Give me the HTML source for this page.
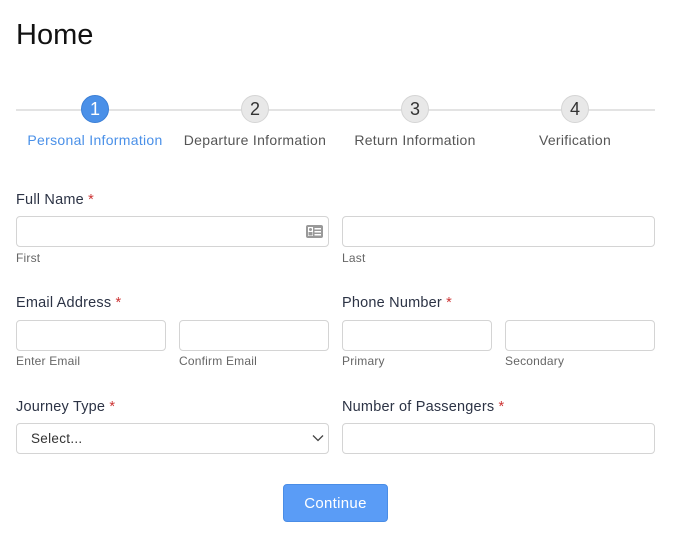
<!DOCTYPE html>
<html><head><style>
body{margin:0;width:680px;height:533px;background:#fff;font-family:"Liberation Sans",sans-serif;position:relative;overflow:hidden}
.a{position:absolute}
h1{position:absolute;left:16px;top:19px;margin:0;font-size:29px;font-weight:normal;color:#111}
.line{left:16px;top:109px;width:639px;height:2px;background:#e3e3e3}
.c{width:26px;height:26px;border-radius:50%;border:1px solid #d5d5d5;background:#e8e8e8;color:#333;font-size:18px;text-align:center;line-height:26px;top:95px}
.c.on{background:#4a90e8;border-color:#3b7fd6;color:#fff}
.st{top:132px;font-size:14px;color:#555;width:170px;text-align:center;letter-spacing:0.3px}
.lab{font-size:14.5px;color:#2c3345;letter-spacing:0.2px}
.lab span{color:#c33}
.in{border:1px solid #d4d4d4;border-radius:4px;box-sizing:border-box;height:31px;background:#fff}
.sub{font-size:12px;color:#666;letter-spacing:0.2px}
.btn{left:283px;top:484px;width:105px;height:38px;background:#5a9cf6;border:1px solid #4a8de6;box-sizing:border-box;border-radius:4px;color:#fff;font-size:15px;text-align:center;line-height:37px;letter-spacing:0.3px}
</style></head><body>
<h1>Home</h1>
<div class="a line"></div>
<div class="a c on" style="left:81px">1</div>
<div class="a c" style="left:241px">2</div>
<div class="a c" style="left:401px">3</div>
<div class="a c" style="left:561px">4</div>
<div class="a st" style="left:10px;color:#4a90e8">Personal Information</div>
<div class="a st" style="left:170px">Departure Information</div>
<div class="a st" style="left:330px">Return Information</div>
<div class="a st" style="left:490px">Verification</div>

<div class="a lab" style="left:16px;top:192px">Full Name <span>*</span></div>
<div class="a in" style="left:16px;top:216px;width:313px"></div>
<svg class="a" style="left:306px;top:225px" width="17" height="13" viewBox="0 0 17 13"><rect x="0" y="0" width="17" height="13" rx="2" fill="#999"/><rect x="2" y="2" width="5" height="9" fill="#fff"/><circle cx="4.5" cy="4.5" r="1.5" fill="#999"/><rect x="2.5" y="7" width="4" height="3.5" fill="#999"/><rect x="8.5" y="3" width="6.5" height="1.5" fill="#fff"/><rect x="8.5" y="6" width="6.5" height="1.5" fill="#fff"/><rect x="8.5" y="9" width="6.5" height="1.5" fill="#fff"/></svg>
<div class="a in" style="left:342px;top:216px;width:313px"></div>
<div class="a sub" style="left:16px;top:251px">First</div>
<div class="a sub" style="left:342px;top:251px">Last</div>

<div class="a lab" style="left:16px;top:295px">Email Address <span>*</span></div>
<div class="a lab" style="left:342px;top:295px">Phone Number <span>*</span></div>
<div class="a in" style="left:16px;top:320px;width:150px"></div>
<div class="a in" style="left:179px;top:320px;width:150px"></div>
<div class="a in" style="left:342px;top:320px;width:150px"></div>
<div class="a in" style="left:505px;top:320px;width:150px"></div>
<div class="a sub" style="left:16px;top:354px">Enter Email</div>
<div class="a sub" style="left:179px;top:354px">Confirm Email</div>
<div class="a sub" style="left:342px;top:354px">Primary</div>
<div class="a sub" style="left:505px;top:354px">Secondary</div>

<div class="a lab" style="left:16px;top:399px">Journey Type <span>*</span></div>
<div class="a lab" style="left:342px;top:399px">Number of Passengers <span>*</span></div>
<div class="a in" style="left:16px;top:423px;width:313px"></div>
<div class="a" style="left:31px;top:431px;font-size:13.5px;color:#333;letter-spacing:0.3px">Select...</div>
<svg class="a" style="left:312px;top:434px" width="12" height="8" viewBox="0 0 12 8"><path d="M1 1.5 L6 6.5 L11 1.5" fill="none" stroke="#444" stroke-width="1.3"/></svg>
<div class="a in" style="left:342px;top:423px;width:313px"></div>

<div class="a btn">Continue</div>
</body></html>
